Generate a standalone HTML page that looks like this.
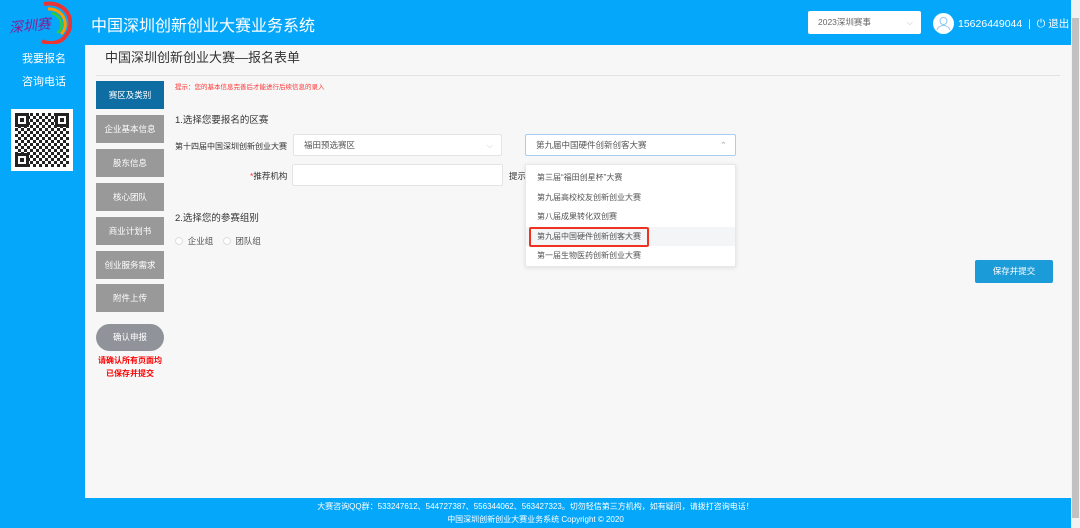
<!DOCTYPE html>
<html><head><meta charset="utf-8"><style>
*{margin:0;padding:0;box-sizing:border-box}
body{width:1080px;height:528px;overflow:hidden;background:#f7f7f7;font-family:"Liberation Sans","Noto Sans CJK SC",sans-serif;position:relative;font-size:12px;color:#333}
.abs{position:absolute}
.hdr{left:0;top:0;width:1071px;height:45px;background:#05a7fb}
.side{left:0;top:45px;width:85px;height:483px;background:#05a7fb}
.main{left:85px;top:45px;width:986px;height:453px;background:#f7f7f7}
.foot{left:0;top:498px;width:1071px;height:30px;background:#05a7fb;color:#fff;font-size:8px;text-align:center;line-height:13px;padding-top:2px}
.sb{left:1071px;top:0;width:9px;height:528px;background:#f1f1f1}
.thumb{left:1072px;top:18px;width:7px;height:500px;background:#c1c1c1}
.nav{left:96px;width:68px;height:28px;background:#999;color:#fff;font-size:8.5px;text-align:center;line-height:28px}
.inp{background:#fff;border:1px solid #e4e4e4;border-radius:2px;font-size:8.5px;color:#555;line-height:20px;padding-left:10px}
.dd div{height:19.5px;line-height:19.5px;padding-left:11px;font-size:8px;color:#555}
.qr{width:54px;height:54px;background:
linear-gradient(45deg,#222 25%,transparent 25%,transparent 75%,#222 75%),
linear-gradient(45deg,#222 25%,#fff 25%,#fff 75%,#222 75%);
background-size:6px 6px;background-position:0 0,3px 3px;position:relative}
.qr i{position:absolute;width:14px;height:14px;border:3px solid #222;background:#fff;box-shadow:inset 0 0 0 2px #fff,inset 0 0 0 5px #222}
</style></head><body>
<div class="abs main"></div>
<div class="abs hdr"></div>
<div class="abs side"></div>
<svg class="abs" style="left:6px;top:0" width="66" height="44" viewBox="0 0 66 44">
<path d="M38 4 C62 0 72 24 58 38 C52 44 42 44 36 41" stroke="#e33" stroke-width="4" fill="none"/>
<path d="M42 9 C58 8 64 26 55 34" stroke="#f90" stroke-width="3" fill="none"/>
<path d="M46 13 C56 16 59 28 51 33" stroke="#3c3" stroke-width="2.5" fill="none"/>
<text x="3" y="31" font-size="14" fill="#8b1a8f" font-style="italic" font-family="Noto Sans CJK SC" transform="rotate(-6 20 28)">深圳赛</text>
</svg>
<div class="abs" style="left:91px;top:12px;color:#fff;font-size:16px">中国深圳创新创业大赛业务系统</div>
<div class="abs inp" style="left:808px;top:11px;width:113px;height:23px;line-height:22px;font-size:8.5px;color:#666;border:none">2023深圳赛事<span style="position:absolute;right:8px;color:#bbb">⌵</span></div>
<div class="abs" style="left:933px;top:13px;width:21px;height:21px;border-radius:50%;background:#fff"><svg width="21" height="21"><circle cx="10.5" cy="8" r="3.5" fill="none" stroke="#8cc8f0" stroke-width="1"/><path d="M4 17 C6 11 15 11 17 17" fill="none" stroke="#8cc8f0"/></svg></div>
<div class="abs" style="left:958px;top:16px;color:#fff;font-size:10.5px">15626449044 &nbsp;| &nbsp;<span style="font-size:11px">⏻</span> 退出</div>
<div class="abs" style="left:22px;top:50px;color:#fff;font-size:11px">我要报名</div>
<div class="abs" style="left:22px;top:73px;color:#fff;font-size:11px">咨询电话</div>
<div class="abs" style="left:11px;top:109px;width:62px;height:62px;background:#fff;padding:4px"><div class="qr"><i style="left:0;top:0"></i><i style="right:0;top:0"></i><i style="left:0;bottom:0"></i></div></div>
<div class="abs" style="left:105px;top:47px;font-size:13px;color:#333">中国深圳创新创业大赛—报名表单</div>
<div class="abs" style="left:96px;top:75px;width:964px;height:1px;background:#e2e2e2"></div>
<div class="abs nav" style="top:81px;background:#0e6ea4">赛区及类别</div>
<div class="abs nav" style="top:115px">企业基本信息</div>
<div class="abs nav" style="top:149px">股东信息</div>
<div class="abs nav" style="top:183px">核心团队</div>
<div class="abs nav" style="top:217px">商业计划书</div>
<div class="abs nav" style="top:251px">创业服务需求</div>
<div class="abs nav" style="top:284px">附件上传</div>
<div class="abs nav" style="top:324px;height:27px;line-height:27px;border-radius:14px;background:#90939a">确认申报</div>
<div class="abs" style="left:96px;top:354px;width:68px;text-align:center;color:#f00;font-size:8px;line-height:13px;font-weight:bold">请确认所有页面均<br>已保存并提交</div>
<div class="abs" style="left:175px;top:81px;color:#f33;font-size:6.5px">提示：您的基本信息完善后才能进行后续信息的录入</div>
<div class="abs" style="left:175px;top:112px;font-size:9.5px">1.选择您要报名的区赛</div>
<div class="abs" style="left:175px;top:141px;font-size:8px">第十四届中国深圳创新创业大赛</div>
<div class="abs inp" style="left:293px;top:134px;width:209px;height:22px">福田预选赛区<span style="position:absolute;right:8px;color:#ccc">⌵</span></div>
<div class="abs inp" style="left:525px;top:134px;width:211px;height:22px;border-color:#a8cdee">第九届中国硬件创新创客大赛<span style="position:absolute;right:8px;color:#aaa">⌃</span></div>
<div class="abs" style="left:250px;top:170px;font-size:8.5px"><span style="color:#f33">*</span>推荐机构</div>
<div class="abs inp" style="left:292px;top:164px;width:211px;height:22px"></div>
<div class="abs" style="left:509px;top:170px;font-size:8.5px">提示</div>
<div class="abs" style="left:175px;top:210px;font-size:9.5px">2.选择您的参赛组别</div>
<div class="abs" style="left:175px;top:235px;font-size:8.5px;color:#555"><span style="display:inline-block;width:8px;height:8px;border:1px solid #ddd;border-radius:50%;background:#fff;vertical-align:-1px"></span>&nbsp; 企业组 &nbsp;&nbsp;&nbsp;<span style="display:inline-block;width:8px;height:8px;border:1px solid #ddd;border-radius:50%;background:#fff;vertical-align:-1px"></span>&nbsp; 团队组</div>
<div class="abs dd" style="left:525px;top:164px;width:211px;height:103px;background:#fff;border:1px solid #e8e8e8;box-shadow:0 1px 4px rgba(0,0,0,.1);padding-top:3px">
<div>第三届“福田创星杯”大赛</div><div>第九届高校校友创新创业大赛</div><div>第八届成果转化双创赛</div><div style="background:#f4f5f7"><span style="display:inline-block;margin-left:-8px;padding:0 6px;border:2px solid #e32;line-height:16px;border-radius:2px">第九届中国硬件创新创客大赛</span></div><div>第一届生物医药创新创业大赛</div></div>
<div class="abs" style="left:975px;top:260px;width:78px;height:23px;background:#1b9bd7;border-radius:2px;color:#fff;font-size:8.5px;text-align:center;line-height:23px">保存并提交</div>
<div class="abs foot">大赛咨询QQ群：533247612、544727387、556344062、563427323。切勿轻信第三方机构，如有疑问，请拨打咨询电话！<br>中国深圳创新创业大赛业务系统 Copyright © 2020</div>
<div class="abs sb"></div><div class="abs thumb"></div>
</body></html>
